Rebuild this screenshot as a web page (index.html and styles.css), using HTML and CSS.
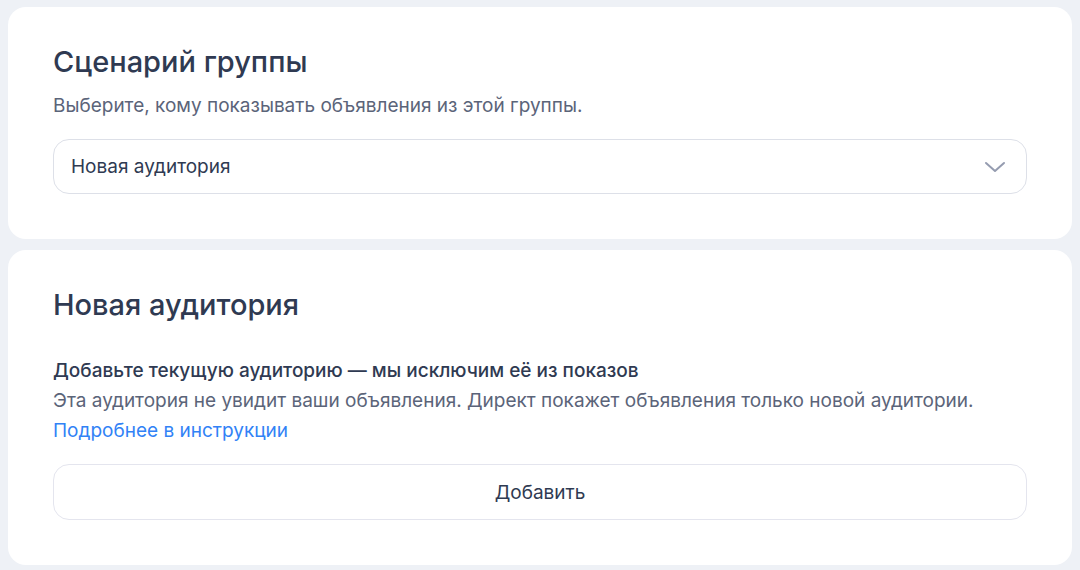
FILE: index.html
```html
<!DOCTYPE html>
<html lang="ru">
<head>
  <meta charset="UTF-8">
  <title>Сценарий группы</title>
  <link rel="stylesheet" href="styles.css">
</head>
<body>

  <section class="card card-scenario">
    <h2>Сценарий группы</h2>
    <p class="hint">Выберите, кому показывать объявления из этой группы.</p>
    <div class="select">
      <span>Новая аудитория</span>
      <svg class="chevron" width="22" height="12" viewBox="0 0 22 12">
        <path d="M2 2 L11 10 L20 2" fill="none" stroke="#959cb0" stroke-width="2" stroke-linecap="round" stroke-linejoin="round"/>
      </svg>
    </div>
  </section>

  <section class="card card-audience">
    <h2>Новая аудитория</h2>
    <div class="info">
      <p class="info-title">Добавьте текущую аудиторию — мы исключим её из показов</p>
      <p class="hint">Эта аудитория не увидит ваши объявления. Директ покажет объявления только новой аудитории.</p>
      <a href="#">Подробнее в инструкции</a>
    </div>
    <button class="add-btn">Добавить</button>
  </section>

</body>
</html>
```

FILE: styles.css
```css
* {
  box-sizing: border-box;
}

body {
  font-family: Inter, "Noto Sans", sans-serif;
  margin: 0;
  padding: 7px 8px 0;
  background: #eef1f6;
  color: #2f3a52;
}

.card {
  background: #fff;
  border-radius: 18px;
  padding: 38px 45px 45px;
  margin-bottom: 11px;
}

.card h2 {
  margin: 0;
  font-size: 29px;
  line-height: 34px;
  font-weight: 500;
  color: #2f3a52;
}

.hint {
  margin: 0;
  font-size: 19px;
  line-height: 30px;
  color: #5b6479;
}

.card-scenario .hint {
  margin-top: 12px;
}

.select {
  display: flex;
  justify-content: space-between;
  align-items: center;
  height: 55px;
  margin-top: 18px;
  padding: 0 20px 0 17px;
  border: 1px solid #dde0e8;
  border-radius: 16px;
  font-size: 19px;
}

.info {
  margin-top: 34px;
}

.info-title {
  margin: 0;
  font-size: 19px;
  line-height: 30px;
  font-weight: 500;
}

.info a {
  display: block;
  font-size: 19px;
  line-height: 30px;
  color: #3182f6;
  text-decoration: none;
}

.add-btn {
  display: block;
  width: 100%;
  height: 56px;
  margin-top: 18px;
  background: #fff;
  border: 1px solid #e4e5ee;
  border-radius: 16px;
  font-family: inherit;
  font-size: 19px;
  color: #2f3a52;
  cursor: pointer;
}
```
